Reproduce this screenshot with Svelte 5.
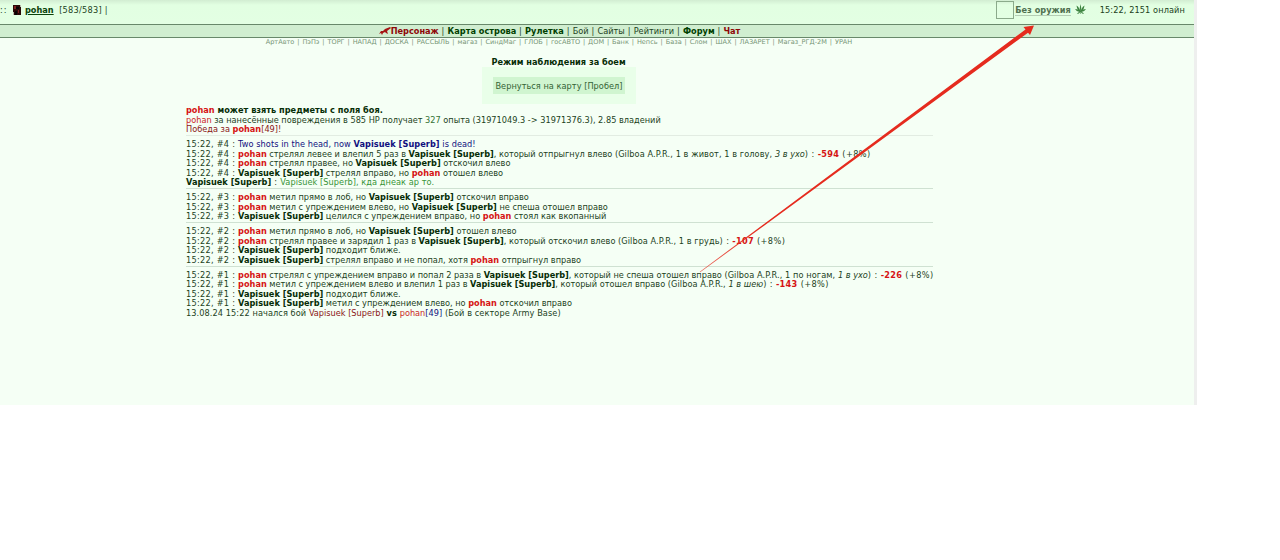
<script>
	const V = 'Vapisuek [Superb]';

	const menu = [
		{ name: 'Персонаж', cls: 'bold red' },
		{ name: 'Карта острова', cls: 'bold' },
		{ name: 'Рулетка', cls: 'bold' },
		{ name: 'Бой', cls: '' },
		{ name: 'Сайты', cls: '' },
		{ name: 'Рейтинги', cls: '' },
		{ name: 'Форум', cls: 'bold' },
		{ name: 'Чат', cls: 'bold red' }
	];

	const links = [
		'АртАвто', 'ПэПэ', 'ТОРГ', 'НАПАД', 'ДОСКА', 'РАССЫЛЬ', 'магаз', 'СиндМаг', 'ГЛОБ', 'госАВТО',
		'ДОМ', 'Банк', 'Непсь', 'База', 'Слом', 'ШАХ', 'ЛАЗАРЕТ', 'Магаз_РГД-2М', 'УРАН'
	];

	// every line is a list of [text, class] parts
	const me = ['pohan', 'me'];
	const foe = [V, 'foe'];
	const at = (n) => [`15:22, #${n} : `, 'time'];
	const hit = (n) => [[') : ', 'wide'], [`-${n}`, 'dmg'], [' (+8%)', 'wide']];

	const groups = [
		[
			[me, [' может взять предметы с поля боя.', 'foe']],
			[['pohan', 'name'], [' за нанесённые повреждения в 585 HP получает '], ['327', 'exp'], [' опыта (31971049.3 -> 31971376.3), 2.85 владений']],
			[['Победа за ', 'win'], me, ['[49]!', 'win']]
		],
		[
			[at(4), ['Two shots in the head, now ', 'dead'], [V, 'dead strong'], [' is dead!', 'dead']],
			[at(4), me, [' стрелял левее и влепил 5 раз в '], foe, [', который отпрыгнул влево '], ['(Gilboa A.P.R., 1 в живот, 1 в голову, ', 'gun'], ['3 в ухо', 'crit'], ...hit(594)],
			[at(4), me, [' стрелял правее, но '], foe, [' отскочил влево']],
			[at(4), foe, [' стрелял вправо, но '], me, [' отошел влево']],
			[foe, [' : ', 'wide'], [V + ', кда днеак ар то.', 'say']]
		],
		[
			[at(3), me, [' метил прямо в лоб, но '], foe, [' отскочил вправо']],
			[at(3), me, [' метил с упреждением влево, но '], foe, [' не спеша отошел вправо']],
			[at(3), foe, [' целился с упреждением вправо, но '], me, [' стоял как вкопанный']]
		],
		[
			[at(2), me, [' метил прямо в лоб, но '], foe, [' отошел влево']],
			[at(2), me, [' стрелял правее и зарядил 1 раз в '], foe, [', который отскочил влево '], ['(Gilboa A.P.R., 1 в грудь', 'gun'], ...hit(107)],
			[at(2), foe, [' подходит ближе.']],
			[at(2), foe, [' стрелял вправо и не попал, хотя '], me, [' отпрыгнул вправо']]
		],
		[
			[at(1), me, [' стрелял с упреждением вправо и попал 2 раза в '], foe, [', который не спеша отошел вправо '], ['(Gilboa A.P.R., 1 по ногам, ', 'gun'], ['1 в ухо', 'crit'], ...hit(226)],
			[at(1), me, [' метил с упреждением влево и влепил 1 раз в '], foe, [', который отошел вправо '], ['(Gilboa A.P.R., ', 'gun'], ['1 в шею', 'crit'], ...hit(143)],
			[at(1), foe, [' подходит ближе.']],
			[at(1), foe, [' метил с упреждением влево, но '], me, [' отскочил вправо']],
			[['13.08.24 15:22 начался бой ', 'gun'], [V, 'win'], [' vs ', 'foe'], ['pohan', 'name'], ['[49]', 'dead'], [' (Бой в секторе Army Base)', 'gun']]
		]
	];
</script>

<div class="page">
	<header>
		<span class="dots">::</span>
		<svg class="avatar" width="8" height="10" viewBox="0 0 8 10">
			<rect width="8" height="10" fill="#2a0808" />
			<path d="M1 1h2v3H1zM5 5h1v3H5z" fill="#7d2020" />
			<path d="M3 2h3v2H3zM2 6h2v4H2z" fill="#080404" />
			<path d="M7 0h1v2H7zM0 7h1v3H0z" fill="#b7b9aa" />
		</svg>
		<a class="user" href="#top">pohan</a>
		<span class="hp">[583/583] |</span>
		<div class="weapon">
			<span class="slot"></span>
			<span class="unarmed">Без оружия</span>
			<svg class="leaf" width="11" height="11" viewBox="0 0 22 22" fill="#3d8440">
				<path d="M11 0Q14 8 11 16Q8 8 11 0ZM3 3Q10 8 11 16Q4 12 3 3ZM19 3Q18 12 11 16Q12 8 19 3ZM0 10Q7 10 11 16Q4 17 0 10ZM22 10Q18 17 11 16Q15 10 22 10ZM4 20Q6 15 11 16Q8 20 4 20ZM18 20Q16 15 11 16Q14 20 18 20Z" />
				<path d="M10.5 15h1v5h-1z" />
			</svg>
		</div>
		<span class="online">15:22, 2151 онлайн</span>
	</header>

	<nav class="menu">
		<svg width="12" height="9" viewBox="0 0 12 9">
			<path d="M0 7L2 4L4 4L6 2L11 0L12 1L8 4L9 7L7 6L6 5L4 6L3 8L2 6Z" fill="#a51414" />
		</svg>{#each menu as item, i}{#if i}<span class="sep">&nbsp;|&nbsp;</span>{/if}<span class={item.cls}>{item.name}</span>{/each}
	</nav>

	<div class="links">{links.join(' | ')}</div>

	<main>
		<h1>Режим наблюдения за боем</h1>
		<div class="back">
			<button>Вернуться на карту [Пробел]</button>
		</div>

		<div class="log">
			{#each groups as lines, g}
				{#if g}<hr class:faint={g === 1} />{/if}
				{#each lines as line}
					<p>{#each line as [text, cls]}<span class={cls}>{text}</span>{/each}</p>
				{/each}
			{/each}
		</div>
	</main>

	<svg class="arrow" width="1194" height="405" viewBox="0 0 1194 405">
		<defs>
			<linearGradient id="fade" gradientUnits="userSpaceOnUse" x1="700" y1="272" x2="760" y2="228">
				<stop offset="0" stop-color="#e52b1e" stop-opacity="0.7" />
				<stop offset="1" stop-color="#e52b1e" />
			</linearGradient>
		</defs>
		<path d="M699.8 271.7L1025.5 29.5L1023.5 27L1034 25.5L1030 35L1028 32.8L700.2 272.3Z" fill="url(#fade)" />
	</svg>
</div>

<style>
	:global(body) {
		background: #fff;
	}

	.page {
		position: relative;
		box-sizing: border-box;
		width: 1197px;
		height: 405px;
		border-right: 3px solid #eeefee;
		background: #f5fff5;
		font-family: 'DejaVu Sans', Verdana, sans-serif;
		font-size: 8.2px;
		color: #1c3f1c;
		overflow: hidden;
	}

	header {
		display: flex;
		align-items: center;
		box-sizing: border-box;
		height: 25px;
		padding: 0 9px 4px 0;
		border-bottom: 1px solid #68886a;
		background: linear-gradient(#d2edd2, #e2ffe2 5px, #e3ffe3);
		white-space: nowrap;
	}

	.dots {
		width: 13px;
		letter-spacing: 1px;
	}

	.user {
		margin: 0 5.5px 0 4px;
		font-weight: bold;
		color: #0b430b;
	}

	.hp {
		letter-spacing: 0.25px;
	}

	.weapon {
		display: flex;
		align-items: center;
		margin-left: auto;
	}

	.slot {
		box-sizing: border-box;
		width: 18px;
		height: 18px;
		margin-right: 1.5px;
		border: 1px solid #8baa8b;
	}

	.unarmed {
		margin-top: 2px;
		line-height: 9px;
		border-bottom: 1px solid #b5cdb5;
		font-weight: bold;
		color: #507050;
	}

	.leaf {
		margin: 0 0 1px 4px;
	}

	.online {
		margin-left: 14px;
		letter-spacing: 0.1px;
	}

	.menu {
		display: flex;
		align-items: center;
		justify-content: center;
		box-sizing: border-box;
		height: 13px;
		padding-right: 75px;
		border-bottom: 1px solid #68886a;
		background: #d0eed0;
		white-space: nowrap;
	}

	.sep {
		letter-spacing: 0.3px;
	}

	.bold {
		font-weight: bold;
		color: #003f00;
	}

	.bold.red {
		color: #8e0707;
	}

	.links {
		padding-right: 76px;
		line-height: 9px;
		font-size: 6.55px;
		word-spacing: 0.85px;
		text-align: center;
		white-space: nowrap;
		color: #769576;
	}

	main {
		width: 747px;
		margin-left: 186px;
	}

	h1 {
		margin: 10px 2px 0 0;
		padding-top: 1px;
		line-height: 9px;
		font-size: 8.2px;
		text-align: center;
		color: #062d06;
	}

	.back {
		display: flex;
		align-items: center;
		justify-content: center;
		box-sizing: border-box;
		width: 154px;
		height: 37px;
		margin: 0 0 0 296px;
		background: #e9ffe9;
	}

	button {
		width: 132px;
		height: 17px;
		padding: 0;
		border: 0;
		background: #d0f5d0;
		font: inherit;
		letter-spacing: 0.04px;
		color: #346334;
		white-space: nowrap;
	}

	.log {
		padding-top: 2.1px;
	}

	p {
		margin: 0;
		line-height: 9.5px;
		white-space: pre;
	}

	hr {
		height: 1px;
		margin: 0.6px 0 3.9px;
		border: 0;
		background: #cfe1d2;
	}

	hr.faint {
		background: #e2ece2;
	}

	.time {
		letter-spacing: 0.27px;
	}

	.wide {
		letter-spacing: 0.4px;
	}

	.gun {
		letter-spacing: 0.08px;
	}

	.me,
	.dmg {
		font-weight: bold;
		color: #d51414;
	}

	.dmg {
		letter-spacing: 0.3px;
	}

	.foe,
	.strong {
		font-weight: bold;
	}

	.foe {
		color: #062d06;
	}

	.name {
		color: #cb2525;
	}

	.win {
		color: #8b1717;
	}

	.exp {
		color: #347334;
	}

	.dead {
		letter-spacing: 0.06px;
		color: #10107f;
	}

	.say {
		letter-spacing: 0.05px;
		color: #389438;
	}

	.crit {
		font-style: italic;
	}

	.arrow {
		position: absolute;
		top: 0;
		left: 0;
		pointer-events: none;
	}
</style>
